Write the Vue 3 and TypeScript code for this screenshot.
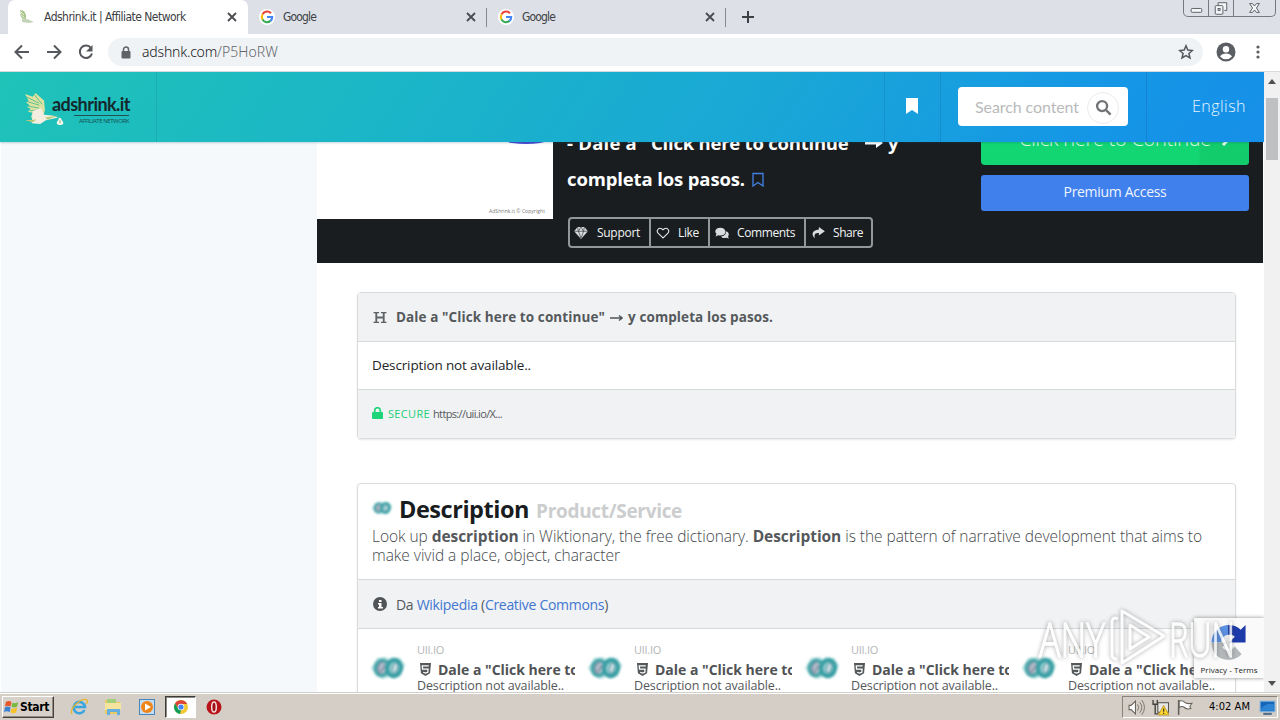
<script setup lang="ts">
interface Action { name: string; x: number; label: number }
interface Tab { title: string; active: boolean; width: number; label: number }

const tabs: Tab[] = [
  { title: 'Adshrink.it | Affiliate Network', active: true, width: 240, label: 142 },
  { title: 'Google', active: false, width: 239, label: 33 },
  { title: 'Google', active: false, width: 239, label: 33 },
]
const actions: Action[] = [
  { name: 'Support', x: 81, label: 43 },
  { name: 'Like', x: 59, label: 21 },
  { name: 'Comments', x: 96, label: 58 },
  { name: 'Share', x: 69, label: 30 },
]
const offers = [1, 2, 3, 4]

// Tracks a line of text so that it takes up the given width.
const vFit = {
  mounted(el: HTMLElement, binding: { value: number }) {
    const count = Math.max(1, (el.textContent ?? '').trim().length)
    const natural = el.getBoundingClientRect().width
    el.style.letterSpacing = `${(binding.value - natural) / count}px`
  },
}
</script>

<template>
  <div class="screen">
    <div class="tabstrip">
      <div v-for="(tab, i) in tabs" :key="i" class="tab" :class="{ active: tab.active }" :style="{ width: tab.width + 'px' }">
        <svg v-if="tab.active" class="fav" viewBox="0 0 16 16">
          <path d="M1 1l4 1 2 4v4l-4-1-2-3 1-1z" fill="#a9c48c" />
          <path d="M3 9l5 1 7 3-5 1-7-1z" fill="#c3d3b8" /><path d="M2 3l3 3M2 6l3 2" stroke="#e8eed0" />
        </svg>
        <svg v-else class="fav" viewBox="0 0 16 16">
          <circle cx="8" cy="8" r="8" fill="#fff" />
          <g fill="none" stroke-width="2.1">
            <path d="M12 4.2A5.2 5.2 0 0 0 3.5 5.4" stroke="#ea4335" />
            <path d="M3.5 5.4a5.2 5.2 0 0 0 0 5.2" stroke="#fbbc05" />
            <path d="M3.5 10.6a5.2 5.2 0 0 0 8 1.3" stroke="#34a853" />
            <path d="M11.5 11.9A5.2 5.2 0 0 0 13.2 8H8" stroke="#4285f4" />
          </g>
        </svg>
        <span class="tabtitle"><span v-fit="tab.label" class="line">{{ tab.title }}</span></span>
        <svg class="close" viewBox="0 0 10 10"><path d="M1 1l8 8M9 1l-8 8" /></svg>
      </div>
      <svg class="plus" viewBox="0 0 14 14"><path d="M7 1v12M1 7h12" /></svg>
      <div class="wincontrols">
        <span class="wc"><svg viewBox="0 0 25 16"><rect x="7.500" y="8.500" width="11" height="4" rx="1" /></svg></span>
        <span class="wc"><svg viewBox="0 0 25 16"><path d="M9.500 5V2.500h9v8H16" /><rect x="6.500" y="5.500" width="8" height="9" rx="1" /><rect x="9.500" y="8.500" width="2" height="2" /></svg></span>
        <span class="wc wide"><svg viewBox="0 0 42 16"><path d="M16 3.500h3l2 2.500 2-2.500h3L23 8l3 4.500h-3L21 10l-2 2.500h-3L19 8z" /></svg></span>
      </div>
    </div>

    <div class="toolbar">
      <svg class="nav" viewBox="0 0 16 16"><path d="M15 8H2M8 1.500L1.500 8 8 14.500" /></svg>
      <svg class="nav" viewBox="0 0 16 16"><path d="M1 8h13M8 1.500L14.500 8 8 14.500" /></svg>
      <svg class="nav" viewBox="0 0 16 16"><path d="M13 4a6.200 6.200 0 1 0 1 5.500" /><path d="M14.500 1v6.500H8z" class="solid" /></svg>
      <div class="omnibox">
        <svg class="lock" viewBox="0 0 10 13"><path d="M2.500 6V3.500a2.500 2.500 0 0 1 5 0V6" fill="none" stroke="#5f6368" stroke-width="1.500" /><rect x="0.500" y="5" width="9" height="7.500" rx="1" fill="#5f6368" /></svg>
        <span class="url"><span v-fit="75" class="line host">adshnk.com</span><span v-fit="61" class="line path">/P5HoRW</span></span>
        <svg class="star" viewBox="0 0 16 16"><path d="M8 1.800l1.800 4.300 4.600.4-3.500 3 1.100 4.500L8 11.600 4 14l1.100-4.500-3.500-3 4.600-.4z" /></svg>
      </div>
      <svg class="profile" viewBox="0 0 20 20"><circle cx="10" cy="10" r="9.500" fill="#5a5d62" /><circle cx="10" cy="7.300" r="3.200" fill="#fff" /><path d="M4 14.500c2-4 10-4 12 0a8 8 0 0 1-12 0z" fill="#fff" /></svg>
      <svg class="dots" viewBox="0 0 4 16"><circle cx="2" cy="3" r="1.600" /><circle cx="2" cy="8" r="1.600" /><circle cx="2" cy="13" r="1.600" /></svg>
    </div>

    <div class="viewport">
      <div class="page">
        <header class="siteheader">
          <div class="brand">
            <svg class="bird" viewBox="0 0 42 36">
              <path d="M1 2l8 3 3-4 9 8 1 10-2 8H7l2-5-5-1 3-3-4-2 3-2-4-3 3-1z" fill="#dce3a0" />
              <path d="M2 5l14 7M3 10l13 4M4 15l12 2M6 20l10-1M11 3l8 10" stroke="#5bbd8f" stroke-width="1" />
              <path d="M9 20l9-3 3 7 9 1 6 2-13 3-6 4-9-1z" fill="#f3eee0" />
              <path d="M1 30l12-1-4 3zM22 27l14-2-11 4" fill="#b9c877" />
              <path d="M37 27l2 1 1 2c3 4 1 5-2 5s-5-2-2-5z" fill="#f4f3e7" /><path d="M38 30v3" stroke="#86ae86" />
            </svg>
            <div class="wordmark">
              <span class="word"><span v-fit="78" class="line">adshrink.it</span></span>
              <span class="rule"></span>
              <span class="tagline"><span v-fit="50" class="line">AFFILIATE NETWORK</span></span>
            </div>
          </div>
          <div class="spacer"></div>
          <div class="saved"><svg viewBox="0 0 12 16"><path d="M0 0h12v16l-6-4-6 4z" fill="#fff" /></svg></div>
          <div class="searchcell">
            <div class="search">
              <span class="placeholder"><span v-fit="104" class="line">Search content</span></span>
              <span class="lens"><svg viewBox="0 0 18 18"><circle cx="7.500" cy="7.500" r="5.300" /><path d="M11.500 11.500l5 5" /></svg></span>
            </div>
          </div>
          <div class="language"><span v-fit="54" class="line">English</span></div>
        </header>

        <aside class="sidebar"></aside>
        <main class="main">
          <section class="hero">
            <div class="thumb">
              <span class="arc"></span>
              <span class="copyright"><span v-fit="56" class="line">AdShrink.it © Copyright</span></span>
            </div>
            <div class="headline">
              <h1>
                <span class="titleline"><span v-fit="84" class="line">- Dale a "</span><span v-fit="206" class="line">Click here to continue"</span><svg class="titlearrow" viewBox="0 0 18 10"><path d="M0 5h13" stroke="#fff" stroke-width="3" /><path d="M11 0l7 5-7 5z" fill="#fff" /></svg><span>y</span></span>
                <span class="titleline"><span v-fit="178" class="line">completa los pasos.</span><svg class="mark" viewBox="0 0 12 16"><path d="M1 1.500h10V14L6 10.500 1 14z" /></svg></span>
              </h1>
              <div class="actions">
                <div v-for="a in actions" :key="a.name" class="action" :style="{ width: a.x + 'px' }">
                  <svg class="aicon" viewBox="0 0 16 14">
                    <g v-if="a.name === 'Support'"><path d="M4 0h8l4 5-8 9-8-9z" fill="#d9dcde" /><path d="M0 5h16M4 0l1 5 3 8 3-8 1-5M5 5l3-5 3 5" stroke="#34383b" stroke-width=".8" fill="none" /></g>
                    <path v-else-if="a.name === 'Like'" d="M8 12.800L2.500 7.500c-3-3 .5-7.500 4-5.500L8 3.300 9.500 2c3.500-2 7 2.500 4 5.500z" fill="none" stroke="#e4e6e7" stroke-width="1.300" />
                    <g v-else-if="a.name === 'Comments'" fill="#d9dcde"><path d="M6 1c8 0 8 9 0 9-1 0-2-.3-2.500-.5L.5 11l1-3C-1.500 5 1 1 6 1z" /><path d="M12.500 5c4 1 4 4.500 2.500 6l1 2.500-3-1c-3 1-5 0-6-1.500 4 0 6-3 5.500-6z" /></g>
                    <path v-else d="M9 0l7 5-7 5V7C5 7 3 8 4.500 13 0 10 .5 3.500 9 3z" fill="#d9dcde" />
                  </svg>
                  <span v-fit="a.label" class="line">{{ a.name }}</span>
                </div>
              </div>
            </div>
            <div class="cta">
              <div class="go"><span v-fit="192" class="line">Click here to Continue</span><span class="goend"><svg viewBox="0 0 10 16"><path d="M2 2l6 6-6 6" /></svg></span></div>
              <div class="premium"><span v-fit="103" class="line">Premium Access</span></div>
            </div>
          </section>

          <section class="card first">
            <div class="row tinted strong">
              <svg class="hicon" viewBox="0 0 14 14"><path d="M0 1.700h6M8 1.700h6M0 12.300h6M8 12.300h6" /><path d="M3 1v12M11 1v12M3 7h8" stroke-width="2" /></svg>
              <span v-fit="209" class="line">Dale a "Click here to continue"</span>
              <svg class="smallarrow" viewBox="0 0 13 8"><path d="M0 4h12M9 1.500L12 4 9 6.500" /></svg>
              <span v-fit="145" class="line">y completa los pasos.</span>
            </div>
            <div class="row plain"><span v-fit="159" class="line">Description not available..</span></div>
            <div class="row tinted secure">
              <svg class="securelock" viewBox="0 0 11 12"><path d="M2.700 6V3.500a2.700 2.700 0 0 1 5.600 0V6" fill="none" stroke="#20d579" stroke-width="1.700" /><rect x="0" y="5" width="11" height="7" rx="1" fill="#20d579" /></svg>
              <span v-fit="42" class="line green">SECURE</span><span v-fit="69" class="line">https://uii.io/X...</span>
            </div>
          </section>

          <section class="card second">
            <div class="about">
              <div class="heading">
                <svg class="logo small" viewBox="0 0 34 24"><use href="#coins" /></svg>
                <span v-fit="130" class="line big">Description</span><span v-fit="146" class="line kind">Product/Service</span>
              </div>
              <p><span v-fit="830" class="line">Look up <b>description</b> in Wiktionary, the free dictionary. <b>Description</b> is the pattern of narrative development that aims to</span></p>
              <p><span v-fit="248" class="line">make vivid a place, object, character</span></p>
            </div>
            <div class="row tinted credit">
              <svg class="info" viewBox="0 0 14 14"><circle cx="7" cy="7" r="7" fill="#505457" /><path d="M6 3h2.500v2H6zM5 6h3.500v4H10v1.500H5V10h1V7.500H5z" fill="#fff" /></svg>
              <span v-fit="212" class="line">Da <a>Wikipedia</a> (<a>Creative Commons</a>)</span>
            </div>
            <div class="offers">
              <div v-for="n in offers" :key="n" class="offer">
                <svg class="logo" viewBox="0 0 34 24"><use href="#coins" /></svg>
                <div class="offertext">
                  <span class="site"><span v-fit="27" class="line">UII.IO</span></span>
                  <span class="offertitle"><svg viewBox="0 0 12 14"><path d="M0 0h12l-1 11-5 3-5-3z" fill="#55585b" /><path d="M9.500 3h-7l.3 3.500h6L8.500 10 6 11l-2.500-1" fill="none" stroke="#fff" stroke-width="1.400" /></svg><span v-fit="141" class="line">Dale a "Click here to</span></span>
                  <span class="offerdesc"><span v-fit="147" class="line">Description not available..</span></span>
                </div>
              </div>
            </div>
          </section>
        </main>

        <div class="captcha">
          <svg viewBox="0 0 40 38">
            <path d="M2 19A18 18 0 0 1 19 1v10a8 8 0 0 0-7 8z" fill="#5b93e6" />
            <path d="M19 1c6 0 10 2 13 5l5-5v18H20l6-6c-2-2-4-2-7-2z" fill="#1c3aa9" />
            <path d="M2 19h16l-5 5c4 5 9 4 13-1l7 8C22 42 2 37 2 19z" fill="#b5b8bb" />
          </svg>
          <span v-fit="57" class="line">Privacy - Terms</span>
        </div>
      </div>
      <div class="scrollbar">
        <svg viewBox="0 0 8 5"><path d="M0 5l4-5 4 5z" /></svg>
        <span class="thumbbar"></span>
        <svg viewBox="0 0 8 5"><path d="M0 0h8L4 5z" /></svg>
      </div>
    </div>

    <svg class="watermark" viewBox="0 0 200 62">
      <g class="wmtext">
        <text x="1" y="49" textLength="66" lengthAdjust="spacingAndGlyphs">ANY</text>
        <text x="131" y="49" textLength="66" lengthAdjust="spacingAndGlyphs">RUN</text>
      </g>
      <g class="wmline">
        <path d="M84 3l42 25-42 27zM92 17l19 12-19 12z" /><path d="M80 11q-6-3-6 4v31q0 5 5 5" />
      </g>
    </svg>

    <div class="taskbar">
      <div class="start">
        <svg viewBox="0 0 16 16"><path d="M2 2q3-2 6 0L7 7Q4 5 1 7z" fill="#e8562a" /><path d="M9 3q3 1 6-1l-1 5q-3 2-6 0z" fill="#79b83c" /><path d="M1 8q3-2 6 0l-1 5q-3-2-6 0z" fill="#3c82d0" /><path d="M8 9q3 1 6-1l-1 5q-3 2-6 0z" fill="#f8c224" /></svg>
        <span v-fit="29" class="line">Start</span>
      </div>
      <div class="quick">
        <svg viewBox="0 0 18 18"><path d="M14.500 12a5.700 5.700 0 1 1 .5-3H4" fill="none" stroke="#3ba5e0" stroke-width="2.600" /><path d="M2 16C-1 11 11-1 17 2c1 1 0 3-1 4" fill="none" stroke="#e5b52d" stroke-width="1.300" /></svg>
        <svg viewBox="0 0 18 18"><path d="M1 4V2h6l1 2h8v12H1z" fill="#e9ca66" /><path d="M3 1h9v6H3z" fill="#a3cf7b" /><path d="M1 5h16v7H1z" fill="#f6e49d" /><path d="M3 17v-6h13v6h-3v-3H6v3z" fill="#65aede" /></svg>
        <svg viewBox="0 0 18 18"><rect x="1.500" y="1.500" width="15" height="15" fill="#c6dcf0" stroke="#4786bd" /><circle cx="9" cy="9" r="6" fill="#ef8519" /><path d="M7 5.500l6 3.500-6 3.500z" fill="#fff" /></svg>
        <span class="chrome"><svg viewBox="0 0 16 16"><circle cx="8" cy="8" r="7" fill="#f4c735" /><path d="M2 4.500A7 7 0 0 1 14.200 5H8L5 9z" fill="#db4437" /><path d="M2 4.500L5.500 10l2.500 1-1 4A7 7 0 0 1 2 4.500z" fill="#109d58" /><circle cx="8" cy="8" r="3.300" fill="#fff" /><circle cx="8" cy="8" r="2.600" fill="#4285f4" /></svg></span>
        <svg viewBox="0 0 18 18"><circle cx="9" cy="9" r="7.500" fill="#b81319" /><ellipse cx="9" cy="9" rx="2.300" ry="5" fill="#a01016" stroke="#f4dddd" stroke-width="1.500" /></svg>
      </div>
      <div class="tray">
        <svg viewBox="0 0 16 16"><path d="M1 6h2l4-4v12l-4-4H1z" fill="#fff" stroke="#67645e" /><path d="M9 5q2 3 0 6M11 3q4 5 0 10M13 1q5 7 0 14" fill="none" stroke="#77736c" stroke-width=".9" /></svg>
        <svg viewBox="0 0 16 16"><rect x="5.500" y="3.500" width="10" height="9" fill="#e8e8e8" stroke="#55534e" /><path d="M1 1v4h4V1M3 5v9h3" fill="none" stroke="#44423e" stroke-width="1.300" /><path d="M11 6l5 9H6z" fill="#ffd52f" stroke="#b18b13" stroke-width=".7" /><path d="M11 9v3M11 13v1" stroke="#222" /></svg>
        <svg viewBox="0 0 16 16"><path d="M2.500 1v14" stroke="#66635d" stroke-width="1.500" /><path d="M3 2q3-1 5 1t7 1l-2 3 1 2q-4 1-6-1t-5 0z" fill="#fff" stroke="#66635d" /></svg>
        <span class="clock"><span v-fit="41" class="line">4:02 AM</span></span>
        <svg class="desk" viewBox="0 0 16 16"><rect x="1" y="2" width="14" height="10" fill="#1666b8" stroke="#88b9df" /><path d="M2 9q5-6 12-4v6H2z" fill="#2d84d5" /><path d="M4 14h8" stroke="#536d8b" stroke-width="2" /></svg>
      </div>
    </div>

    <svg width="0" height="0" class="defs">
      <defs>
        <g id="coins">
          <path d="M0 12l6-10 8-1 4 2 3-2 8 1 5 7-4 11-7 3-5-2-6 2-7-3z" fill="#b2dede" />
          <ellipse cx="11" cy="12" rx="6.500" ry="7.500" fill="#b5bfcc" stroke="#48a5a9" stroke-width="3.500" transform="rotate(15 11 12)" />
          <path d="M12 6c-6 2-6 9-2 12M14 9l-4 7" fill="none" stroke="#8390a5" stroke-width="1.600" />
          <ellipse cx="23" cy="12" rx="7" ry="8" fill="#8fc9cd" stroke="#3a9fa4" stroke-width="4" transform="rotate(15 23 12)" />
          <ellipse cx="24" cy="12" rx="2" ry="5" fill="#dbe9ec" stroke="#6295a5" transform="rotate(15 24 12)" />
        </g>
      </defs>
    </svg>
  </div>
</template>

<style>
html, body { margin: 0; overflow: hidden; }
</style>

<style scoped>
* { box-sizing: border-box; }
.screen { width: 1280px; height: 720px; position: relative; overflow: hidden; display: flex; flex-direction: column; background: #fff; font-family: "Open Sans", "Noto Sans", sans-serif; }
svg { display: block; flex: none; }
.line { display: inline-block; white-space: pre; flex: none; }
.defs { position: absolute; }

.tabstrip { height: 34px; flex: none; display: flex; background: #dde0e7; padding-left: 8px; font: 12px/34px "DejaVu Sans Condensed", "DejaVu Sans", sans-serif; color: #3c4043; }
.tab { height: 34px; display: flex; align-items: center; padding: 0 11px 0 11px; position: relative; }
.tab:not(.active)::after { content: ""; position: absolute; right: 0; top: 8px; width: 1px; height: 19px; background: #85898f; }
.tab.active { background: #fff; border-radius: 7px 7px 0 0; }
.fav { width: 16px; height: 16px; margin-right: 8px; }
.tab.active .fav { margin-right: 9px; }
.tabtitle { flex: 1; }
.close { width: 10px; height: 10px; stroke: #484b50; stroke-width: 1.8; }
.plus { width: 14px; height: 14px; margin: 10px 0 0 15px; stroke: #3c4043; stroke-width: 2; }
.wincontrols { margin: 0 4px 0 auto; width: 93px; height: 17px; border: 1px solid #767a80; border-top: 0; border-radius: 0 0 5px 5px; display: flex; }
.wc { width: 25px; border-right: 1px solid #767a80; height: 16px; }
.wc.wide { width: 41px; border: 0; }
.wc svg { width: 100%; height: 16px; fill: #f4f5f7; stroke: #5a5e65; }

.toolbar { height: 38px; flex: none; display: flex; align-items: center; padding: 0 0 1px 14px; background: #fff; border-bottom: 1px solid #d7dbdd; }
.nav { width: 16px; height: 16px; margin-right: 16px; fill: none; stroke: #54575b; stroke-width: 2; }
.nav .solid { fill: #54575b; stroke: none; }
.omnibox { margin-left: -2px; width: 1095px; height: 28px; border-radius: 14px; background: #f0f3f5; display: flex; align-items: center; padding: 0 9px 0 13px; }
.lock { width: 10px; height: 13px; }
.url { flex: 1; margin-left: 11px; font: 14px/28px "Noto Sans", sans-serif; color: #303337; font-weight: 300; display: flex; }
.host { color: #15171a; }
.path { color: #63676b; }
.star { width: 16px; height: 16px; fill: none; stroke: #54575b; stroke-width: 1.5; }
.profile { width: 20px; height: 20px; margin-left: 13px; }
.dots { width: 4px; height: 16px; margin-left: 20px; fill: #5a5d62; }

.viewport { height: 620px; flex: none; display: flex; overflow: hidden; }
.page { width: 1264px; height: 620px; position: relative; display: flex; overflow: hidden; }
.siteheader { position: absolute; inset: 0 0 auto 0; z-index: 3; height: 70px; display: flex; background: linear-gradient(125deg, #1fc3b7 0%, #1bb6c7 30%, #19a6d7 62%, #1597e6 85%, #168fe8 100%); box-shadow: 0 1px 2px rgba(20, 80, 110, .25); }
.brand { width: 157px; border-right: 1px solid rgba(20, 100, 120, .18); display: flex; padding: 20px 0 0 22px; }
.bird { width: 44px; height: 34px; }
.wordmark { margin: 0 0 0 -14px; display: flex; flex-direction: column; width: 80px; }
.word { font: 18px/23px "Lato", sans-serif; font-weight: 700; color: #14292d; height: 22px; margin-top: 1px; }
.rule { height: 1px; margin-left: 22px; width: 55px; background: #214f52; }
.tagline { font: 6px/10px "Open Sans", sans-serif; color: #174f52; margin-left: 27px; }
.spacer { flex: 1; }
.saved { width: 57px; border-left: 1px solid rgba(20, 80, 130, .2); border-right: 1px solid rgba(20, 80, 130, .2); display: flex; align-items: center; justify-content: center; }
.saved svg { width: 12px; height: 16px; margin: 0 2px 2px 0; }
.searchcell { width: 205px; padding: 15px 0 0 17px; }
.search { width: 170px; height: 39px; border-radius: 4px; background: #fff; display: flex; align-items: center; padding-left: 17px; }
.placeholder { width: 112px; font: 16px/38px "Lato", sans-serif; color: #b9babb; padding-top: 1px; }
.lens { width: 32px; height: 32px; border: 1px solid #ebecec; border-radius: 50%; display: flex; align-items: center; justify-content: center; margin-top: 2px; }
.lens svg { width: 17px; height: 17px; fill: none; stroke: #727577; stroke-width: 2.5; }
.language { width: 118px; border-left: 1px solid rgba(20, 80, 150, .25); color: #e7f5ff; font-size: 16px; line-height: 68px; padding-left: 45px; font-weight: 300; }

.sidebar { width: 317px; flex: none; background: #f5f9fb; border-left: 1px solid #fff; }
.main { width: 947px; flex: none; background: #fff; }
.hero { width: 946px; height: 191px; background: #191d1f; display: flex; }
.thumb { width: 236px; height: 147px; background: #fff; display: flex; flex-direction: column; justify-content: space-between; align-items: flex-end; padding: 43px 8px 4px 0; overflow: hidden; }
.arc { width: 74px; height: 29px; border-radius: 50%; background: #494bd3; margin-right: -18px; }
.copyright { font: 5px/8px "Open Sans", sans-serif; color: #777; }
.headline { width: 414px; padding: 53px 0 0 14px; }
h1 { margin: 0; font-size: 18.500px; font-weight: 700; line-height: 36px; color: #fff; }
.titleline { display: flex; align-items: center; height: 36px; }
.titlearrow { width: 18px; height: 10px; margin: 0 5px 0 8px; }
.mark { width: 12px; height: 16px; margin: 2px 0 0 7px; fill: none; stroke: #4380e4; stroke-width: 1.3; }
.actions { margin: 20px 0 0 1px; display: flex; width: 305px; height: 31px; border: 2px solid #92989a; border-radius: 4px; color: #f2f4f5; font-size: 12px; }
.action { flex: none; display: flex; align-items: center; border-right: 2px solid #92989a; padding-left: 5px; }
.action:first-child { padding-left: 4px; width: 80px; }
.action:last-child { border: 0; padding-left: 5px; }
.aicon { width: 14px; height: 12px; margin-right: 9px; }
.action:nth-child(2) .aicon, .action:nth-child(3) .aicon, .action:last-child .aicon { margin-right: 8px; }
.cta { width: 268px; margin-left: 14px; padding-top: 43px; }
.go { height: 50px; border-radius: 4px; background: #12d671; color: #dff9ea; font-size: 20px; font-weight: 300; line-height: 47px; display: flex; padding-left: 38px; overflow: hidden; }
.goend { width: 51px; margin-left: auto; margin-right: 0; background: linear-gradient(90deg, #12d671 0, #12cc6c 3px); }
.go .line { margin-right: -13px; position: relative; z-index: 1; }
.goend svg { width: 10px; height: 16px; margin: 16px 0 0 23px; fill: none; stroke: #e7fff2; stroke-width: 3; }
.premium { margin-top: 10px; height: 36px; border-radius: 3px; background: #4080ec; color: #eff5ff; font-size: 14px; line-height: 34px; text-align: center; }

.card { width: 879px; margin-left: 40px; border: 1px solid #d9dbdc; border-radius: 4px; box-shadow: 0 1px 2px rgba(0, 0, 0, .09); background: #fff; }
.first { margin-top: 29px; height: 147px; }
.row { height: 49px; padding-left: 14px; display: flex; align-items: center; border-bottom: 1px solid #d6d9da; color: #55595c; }
.tinted { background: #f0f2f4; }
.strong { font-size: 13.500px; font-weight: 700; }
.hicon { width: 14px; height: 13px; margin: 0 9px 0 1px; fill: none; stroke: #606366; stroke-width: 1.5; }
.smallarrow { width: 13px; height: 8px; margin: 1px 5px 0 5px; fill: none; stroke: #505457; stroke-width: 1.500; }
.plain { height: 48px; font-size: 13.500px; color: #222527; padding-bottom: 2px; }
.secure { height: 48px; border: 0; font-size: 11px; padding-bottom: 2px; }
.securelock { width: 11px; height: 12px; margin: 0 5px 0 0; }
.green { color: #20cf76; margin-right: 3px; }
.second { margin-top: 44px; height: 300px; }
.about { height: 96px; border-bottom: 1px solid #d6d9da; padding: 9px 0 0 14px; }
.heading { display: flex; height: 33px; line-height: 33px; }
.logo { width: 34px; height: 24px; filter: blur(.8px); }
.logo.small { width: 20px; height: 14px; margin: 8px 7px 0 0; }
.big { font-size: 23.500px; font-weight: 700; color: #191c1e; }
.kind { font-size: 19px; font-weight: 700; color: #cbcdce; margin-left: 7px; padding-top: 2px; }
p { margin: 0; height: 19px; line-height: 20px; font-size: 15.500px; font-weight: 300; color: #44484b; }
p b { font-weight: 700; color: #55585b; }
.credit { font-size: 14px; }
.info { width: 14px; height: 14px; margin: 0 9px 0 1px; }
a { color: #4277d0; }
.offers { display: grid; grid-template-columns: repeat(4, 217px); padding: 13px 0 0 14px; }
.offer { display: flex; }
.offer .logo { margin-top: 14px; margin-left: -1px; }
.offertext { width: 158px; margin-left: 12px; display: flex; flex-direction: column; overflow: hidden; }
.site { font-size: 11px; line-height: 16px; color: #b3b5b6; }
.offertitle { height: 20px; margin-top: 1px; display: flex; align-items: center; font-size: 14px; font-weight: 700; color: #505356; }
.offertitle svg { width: 11px; height: 13px; margin: 0 7px 0 3px; }
.offerdesc { font-size: 12.500px; line-height: 14px; color: #55585b; }

.captcha { position: absolute; left: 1194px; top: 546px; width: 70px; height: 60px; background: #fafafa; box-shadow: 0 0 4px #888; z-index: 2; display: flex; flex-direction: column; align-items: center; font: 8px/12px "Open Sans", sans-serif; color: #222; }
.captcha svg { width: 40px; height: 37px; margin: 6px 0 3px; }
.scrollbar { width: 16px; background: #f1f1f1; display: flex; flex-direction: column; align-items: center; padding: 7px 1px 6px 0; }
.scrollbar svg { width: 8px; height: 5px; fill: #505050; }
.thumbbar { width: 12px; height: 62px; background: #bfc0c1; margin: 14px 0 auto; }

.watermark { position: absolute; left: 1038px; top: 608px; width: 200px; height: 62px; z-index: 4; overflow: visible; filter: drop-shadow(0 0 2px rgba(70, 70, 70, .6)); opacity: .8; }
.wmtext { font-family: "Open Sans", sans-serif; font-size: 48px; font-weight: 300; fill: #fff; stroke: #fff; stroke-width: 1.4; }
.wmline { fill: none; stroke: #fff; stroke-width: 3; stroke-linejoin: round; }

.taskbar { height: 28px; flex: none; background: #d5cec6; border-top: 1px solid #d0cec9; box-shadow: inset 0 1px #fff; display: flex; align-items: center; padding: 1px 2px 0; position: relative; }
.start { width: 52px; height: 22px; background: #d7d1c9; border: 1px solid; border-color: #fff #45423e #45423e #fff; box-shadow: inset -1px -1px #918b84; display: flex; align-items: center; font: bold 12px/20px "DejaVu Sans Condensed", sans-serif; color: #000; padding-left: 1px; }
.start svg { width: 15px; height: 15px; margin-right: 1px; }
.quick { display: flex; align-items: center; margin-left: 16px; }
.quick > svg { width: 18px; height: 18px; margin-right: 16px; }
.quick > svg:nth-child(3) { margin-right: 9px; }
.chrome { width: 31px; height: 22px; background: #fff; border: 1px solid; border-color: #3e3c38 #fff #fff #3e3c38; box-shadow: inset 1px 1px #8c8882; display: flex; align-items: center; justify-content: center; margin-right: 9px; }
.chrome svg { width: 16px; height: 16px; }
.tray { margin-left: auto; width: 156px; height: 22px; border: 1px solid; border-color: #87827b #fff #fff #87827b; display: flex; align-items: center; padding-left: 5px; }
.tray svg { width: 17px; height: 17px; margin-right: 7px; }
.clock { font: 11px/20px "DejaVu Sans Condensed", sans-serif; color: #000; margin-left: 9px; width: 50px; }
.tray .desk { margin-right: 0; }
</style>
